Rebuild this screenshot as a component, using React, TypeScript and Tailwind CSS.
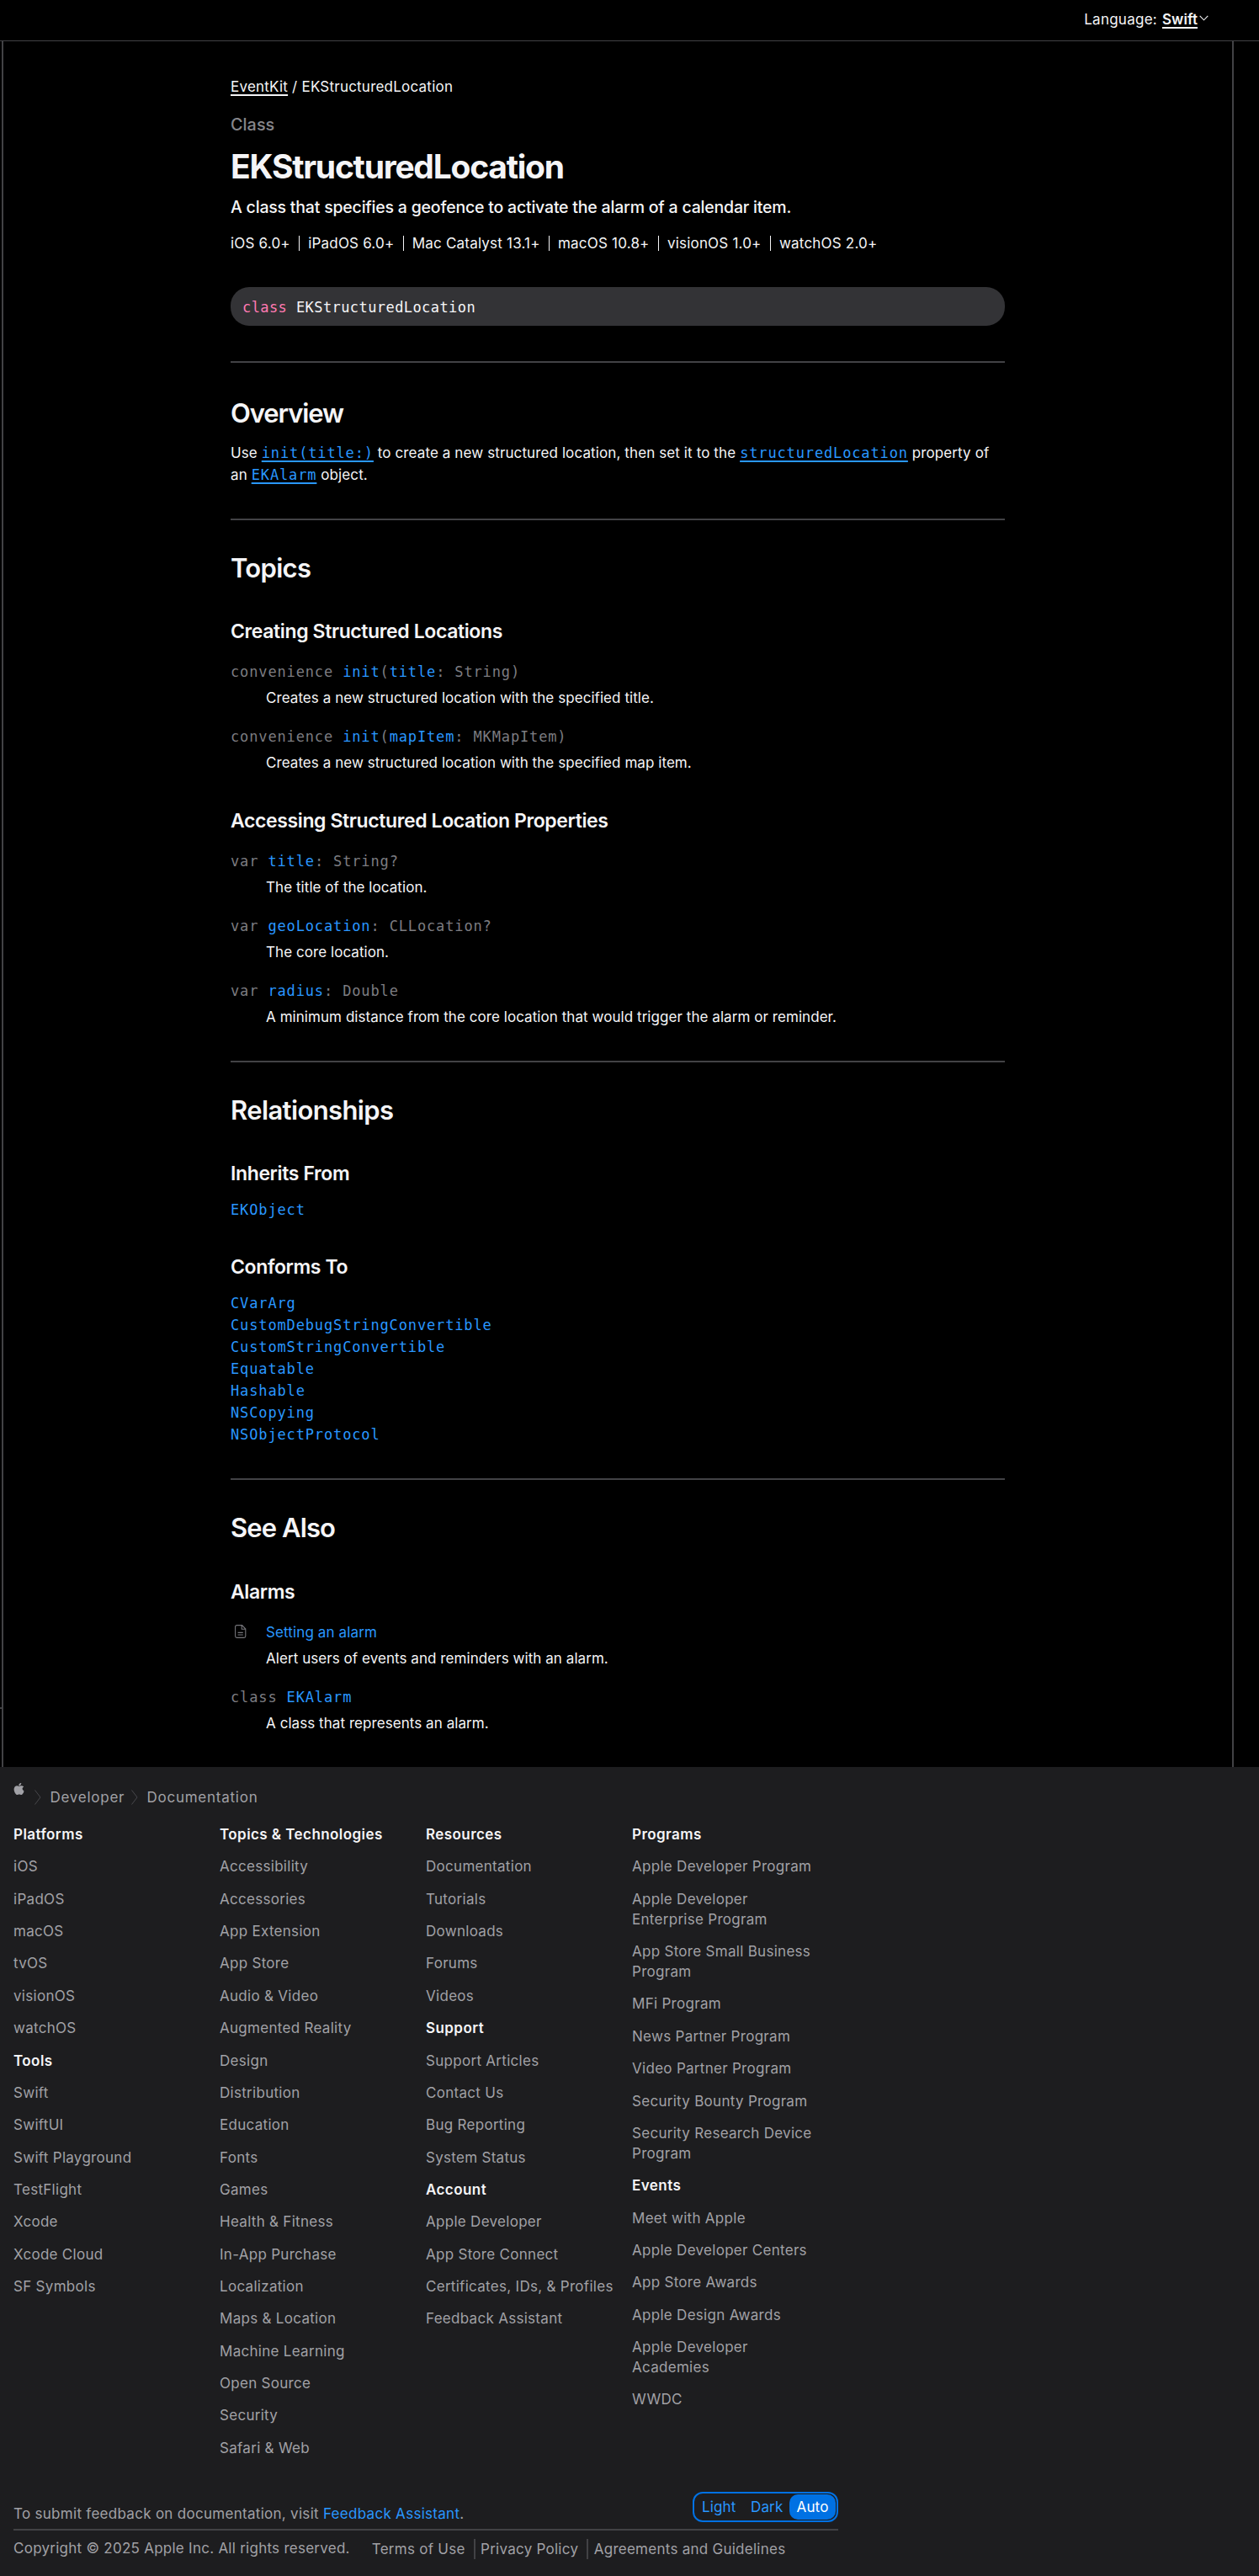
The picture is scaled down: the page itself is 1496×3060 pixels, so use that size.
import React from "react";

type Entry = { tokens: [string, boolean][]; text: string };

const creating: Entry[] = [
  {
    tokens: [["convenience ", false], ["init", true], ["(", false], ["title", true], [": String)", false]],
    text: "Creates a new structured location with the specified title.",
  },
  {
    tokens: [["convenience ", false], ["init", true], ["(", false], ["mapItem", true], [": MKMapItem)", false]],
    text: "Creates a new structured location with the specified map item.",
  },
];

const accessing: Entry[] = [
  { tokens: [["var ", false], ["title", true], [": String?", false]], text: "The title of the location." },
  { tokens: [["var ", false], ["geoLocation", true], [": CLLocation?", false]], text: "The core location." },
  {
    tokens: [["var ", false], ["radius", true], [": Double", false]],
    text: "A minimum distance from the core location that would trigger the alarm or reminder.",
  },
];

const platforms = ["iOS 6.0+", "iPadOS 6.0+", "Mac Catalyst 13.1+", "macOS 10.8+", "visionOS 1.0+", "watchOS 2.0+"];

const protocols = [
  "CVarArg",
  "CustomDebugStringConvertible",
  "CustomStringConvertible",
  "Equatable",
  "Hashable",
  "NSCopying",
  "NSObjectProtocol",
];

const directory: { title: string; links: string[] }[][] = [
  [
    { title: "Platforms", links: ["iOS", "iPadOS", "macOS", "tvOS", "visionOS", "watchOS"] },
    {
      title: "Tools",
      links: ["Swift", "SwiftUI", "Swift Playground", "TestFlight", "Xcode", "Xcode Cloud", "SF Symbols"],
    },
  ],
  [
    {
      title: "Topics & Technologies",
      links: [
        "Accessibility", "Accessories", "App Extension", "App Store", "Audio & Video", "Augmented Reality",
        "Design", "Distribution", "Education", "Fonts", "Games", "Health & Fitness", "In-App Purchase",
        "Localization", "Maps & Location", "Machine Learning", "Open Source", "Security", "Safari & Web",
      ],
    },
  ],
  [
    { title: "Resources", links: ["Documentation", "Tutorials", "Downloads", "Forums", "Videos"] },
    { title: "Support", links: ["Support Articles", "Contact Us", "Bug Reporting", "System Status"] },
    {
      title: "Account",
      links: ["Apple Developer", "App Store Connect", "Certificates, IDs, & Profiles", "Feedback Assistant"],
    },
  ],
  [
    {
      title: "Programs",
      links: [
        "Apple Developer Program", "Apple Developer Enterprise Program", "App Store Small Business Program",
        "MFi Program", "News Partner Program", "Video Partner Program", "Security Bounty Program",
        "Security Research Device Program",
      ],
    },
    {
      title: "Events",
      links: [
        "Meet with Apple", "Apple Developer Centers", "App Store Awards", "Apple Design Awards",
        "Apple Developer Academies", "WWDC",
      ],
    },
  ],
];

const mono = "font-['DejaVu_Sans_Mono',monospace] text-[17px] tracking-[0.86px]";

function Rule({ className }: { className: string }) {
  return <div className={`h-[2px] bg-[#424245] ${className}`} />;
}

function SectionTitle({ children, className }: { children: React.ReactNode; className: string }) {
  return <h2 className={`text-[31px] leading-9 font-semibold ${className}`}>{children}</h2>;
}

function GroupTitle({ children, className }: { children: React.ReactNode; className: string }) {
  return <h3 className={`text-[23px] leading-7 font-semibold tracking-[-0.38px] ${className}`}>{children}</h3>;
}

function Entries({ items, className }: { items: Entry[]; className: string }) {
  return (
    <div className={`flex flex-col gap-[21px] ${className}`}>
      {items.map((item) => (
        <div key={item.text}>
          <div className={`${mono} h-[26px] leading-6 whitespace-pre text-[#7c7c80]`}>
            {item.tokens.map(([t, link], i) => (
              <span key={i} className={link ? "text-[#2997ff]" : ""}>
                {t}
              </span>
            ))}
          </div>
          <p className="mt-1 pl-[42px] leading-[26px]">{item.text}</p>
        </div>
      ))}
    </div>
  );
}

function CodeLink({ children }: { children: string }) {
  return <a className={`${mono} text-[#2997ff] underline decoration-2 underline-offset-[3px]`}>{children}</a>;
}

function Chevron() {
  return (
    <svg width="8" height="18" viewBox="0 0 8 18" fill="none" stroke="#48484c" strokeWidth="1">
      <path d="M0.5 0.5 L7 9 L0.5 17.5" />
    </svg>
  );
}

export default function App() {
  return (
    <div className="min-h-[3060px] bg-black font-['Inter',sans-serif] text-[17px] tracking-[0.06px] text-[#f5f5f7]">
      <header className="flex h-[49px] items-center justify-end border-b border-[#424245] pr-[60px] pb-[3px] leading-6">
        <span className="mr-[6px] tracking-[0.25px]">Language:</span>
        <span className="font-semibold underline decoration-2 underline-offset-[2.5px]">Swift</span>
        <svg className="-mt-[2px] ml-[2px]" width="11" height="7" viewBox="0 0 11 7" fill="none" stroke="#f5f5f7" strokeWidth="1.1">
          <path d="M0.7 0.8 L5.5 5.8 L10.3 0.8" />
        </svg>
      </header>

      <div className="flex h-[2050px]">
        <div className="flex w-1 shrink-0 flex-col justify-end border-r-2 border-[#424245] pb-[69px]">
          <div className="h-[2px] bg-[#424245]" />
        </div>
        <main className="w-[1462px] shrink-0 border-r-2 border-[#424245] pl-[270px]">
          <article className="w-[920px] pt-[42px]">
            <nav className="leading-6 tracking-[0.22px]">
              <span className="underline decoration-2 underline-offset-[3px]">EventKit</span> / EKStructuredLocation
            </nav>
            <div className="mt-[21px] text-[19.8px] leading-6 font-medium text-[#86868b]">Class</div>
            <h1 className="mt-4 text-[39px] leading-[44px] font-bold tracking-[-1.24px]">EKStructuredLocation</h1>
            <p className="mt-3 text-[19.5px] leading-7 font-medium tracking-[-0.2px]">
              A class that specifies a geofence to activate the alarm of a calendar item.
            </p>
            <div className="mt-[17px] flex items-center leading-6 tracking-[0.2px]">
              {platforms.map((p, i) => (
                <React.Fragment key={p}>
                  {i > 0 && <span className="mx-[10.2px] h-[18px] w-px bg-[#f5f5f7]" />}
                  <span>{p}</span>
                </React.Fragment>
              ))}
            </div>
            <div className="mt-10 h-[46px] rounded-[22px] bg-[#333336] pl-[14px] font-['DejaVu_Sans_Mono',monospace] text-[17px] leading-[48px] tracking-[0.42px]">
              <span className="text-[#ff7ab2]">class</span> EKStructuredLocation
            </div>

            <Rule className="mt-[42px]" />
            <SectionTitle className="mt-[42px] tracking-[-1.1px]">Overview</SectionTitle>
            <p className="mt-4 h-[52px] leading-[26px] tracking-[0.11px]">
              Use <CodeLink>init(title:)</CodeLink> to create a new structured location, then set it to the{" "}
              <CodeLink>structuredLocation</CodeLink> property of
              <br />
              an <CodeLink>EKAlarm</CodeLink> object.
            </p>

            <Rule className="mt-[39px]" />
            <SectionTitle className="mt-[39px] tracking-[-0.7px]">Topics</SectionTitle>
            <GroupTitle className="mt-[43px]">Creating Structured Locations</GroupTitle>
            <Entries className="mt-[22px]" items={creating} />
            <GroupTitle className="mt-[42px]">Accessing Structured Location Properties</GroupTitle>
            <Entries className="mt-[22px]" items={accessing} />

            <Rule className="mt-[39px]" />
            <SectionTitle className="mt-[39px] tracking-[-0.62px]">Relationships</SectionTitle>
            <GroupTitle className="mt-[43px]">Inherits From</GroupTitle>
            <div className={`${mono} mt-[17px] h-[26px] leading-6 text-[#2997ff]`}>EKObject</div>
            <GroupTitle className="mt-10">Conforms To</GroupTitle>
            <ul className={`${mono} mt-[17px] leading-6 text-[#2997ff]`}>
              {protocols.map((p) => (
                <li key={p} className="h-[26px]">
                  {p}
                </li>
              ))}
            </ul>

            <Rule className="mt-[38px]" />
            <SectionTitle className="mt-[39px] tracking-[-0.9px]">See Also</SectionTitle>
            <GroupTitle className="mt-11">Alarms</GroupTitle>
            <div className="mt-[21px] flex leading-[26px]">
              <div className="w-[42px] pt-1 pl-[5px]">
                <svg width="14" height="16" viewBox="0 0 14 16" fill="none" stroke="#75757a" strokeWidth="1.1">
                  <path d="M8.6 0.6 H2.4 A1.8 1.8 0 0 0 0.6 2.4 V13.6 A1.8 1.8 0 0 0 2.4 15.4 H11 A1.8 1.8 0 0 0 12.8 13.6 V5 Z M8.2 0.8 V5.2 H12.6" />
                  <path d="M3.6 9.4 H9.8 M3.6 12 H9.8" />
                </svg>
              </div>
              <a className="tracking-[0.12px] text-[#2997ff]">Setting an alarm</a>
            </div>
            <p className="mt-[5px] pl-[42px] leading-[26px]">Alert users of events and reminders with an alarm.</p>
            <Entries
              className="mt-[21px]"
              items={[{ tokens: [["class ", false], ["EKAlarm", true]], text: "A class that represents an alarm." }]}
            />
          </article>
        </main>
      </div>

      <footer className="h-[961px] bg-[#1d1d1f] px-4 pt-6 leading-6 tracking-[0.29px] text-[#a1a1a6]">
        <nav className="flex h-6 items-center tracking-[0.75px]">
          <svg className="-mt-5 mr-3" width="13" height="14" viewBox="0 0 842 1000" fill="#a1a1a6">
            <path d="M824.666 779.304C809.544 814.24 791.644 846.399 770.905 875.965C742.636 916.27 719.49 944.168 701.652 959.661C674.001 985.09 644.374 998.113 612.649 998.854C589.873 998.854 562.407 992.373 530.433 979.226C498.354 966.142 468.874 959.661 441.92 959.661C413.651 959.661 383.333 966.142 350.904 979.226C318.426 992.373 292.262 999.225 272.258 999.903C241.834 1001.199 211.51 987.806 181.241 959.661C161.922 942.81 137.757 913.923 108.809 873C77.75 829.3 52.215 778.625 32.211 720.85C10.787 658.446 0.047 598.018 0.047 539.516C0.047 472.501 14.528 414.701 43.532 366.265C66.327 327.361 96.652 296.672 134.606 274.143C172.56 251.614 213.569 240.134 257.73 239.4C281.893 239.4 313.58 246.874 352.959 261.563C392.226 276.302 417.439 283.776 428.49 283.776C439.043 283.776 471.59 275.037 525.968 257.607C577.391 241.102 620.791 234.268 656.346 237.286C752.691 245.062 795 283.041 828 325C760 365 715 415 715 485C715 570 770 625 842 660C838 700 832 740 824.666 779.304ZM620 20.012C620 72.538 600.859 121.581 562.64 166.976C516.518 220.897 460.732 252.055 400.237 247.139C399.466 240.837 399.02 234.205 399.02 227.236C399.02 176.811 420.972 122.845 459.956 78.72C479.418 56.379 504.171 37.803 534.188 22.985C564.14 8.388 592.471 0.315 619.117 0C619.895 6.68 620 13.361 620 20.012Z" />
          </svg>
          <Chevron />
          <span className="ml-[10.5px] w-[96.5px]">Developer</span>
          <Chevron />
          <span className="ml-[10.5px]">Documentation</span>
        </nav>

        <div className="mt-5 grid h-[753px] w-[980px] grid-cols-[repeat(4,245px)]">
          {directory.map((column) => (
            <div key={column[0].title} className="pr-5">
              {column.map((group) => (
                <div key={group.title} className="mb-[14.36px]">
                  <h4 className="font-semibold tracking-[0.43px] text-[#f5f5f7]">{group.title}</h4>
                  {group.links.map((link) => (
                    <div key={link} className="mt-[14.36px]">
                      {link}
                    </div>
                  ))}
                </div>
              ))}
            </div>
          ))}
        </div>

        <div className="mt-10 flex h-[44px] w-[980px] justify-between">
          <p className="mt-[14px]">
            To submit feedback on documentation, visit <a className="text-[#2997ff]">Feedback Assistant</a>.
          </p>
          <div className="flex h-9 w-[173px] items-center rounded-xl border-2 border-[#0071e3] text-[#2997ff]">
            <span className="ml-[9px] w-[58px] tracking-[0.15px]">Light</span>
            <span className="w-[46px] tracking-[0.15px]">Dark</span>
            <span className="flex h-[30px] w-[55px] items-center justify-center rounded-[10px] bg-[#0071e3] tracking-[0.15px] text-white">
              Auto
            </span>
          </div>
        </div>
        <Rule className="w-[980px]" />
        <div className="mt-[9px] flex tracking-[0.26px]">
          <span className="mr-[26px]">Copyright © 2025 Apple Inc. All rights reserved.</span>
          <span className="mt-px border-r-2 border-[#424245] pr-[10px]">Terms of Use</span>
          <span className="mt-px border-r-2 border-[#424245] pr-[10px] pl-[6.5px]">Privacy Policy</span>
          <span className="mt-px pl-[6.5px]">Agreements and Guidelines</span>
        </div>
      </footer>
    </div>
  );
}
